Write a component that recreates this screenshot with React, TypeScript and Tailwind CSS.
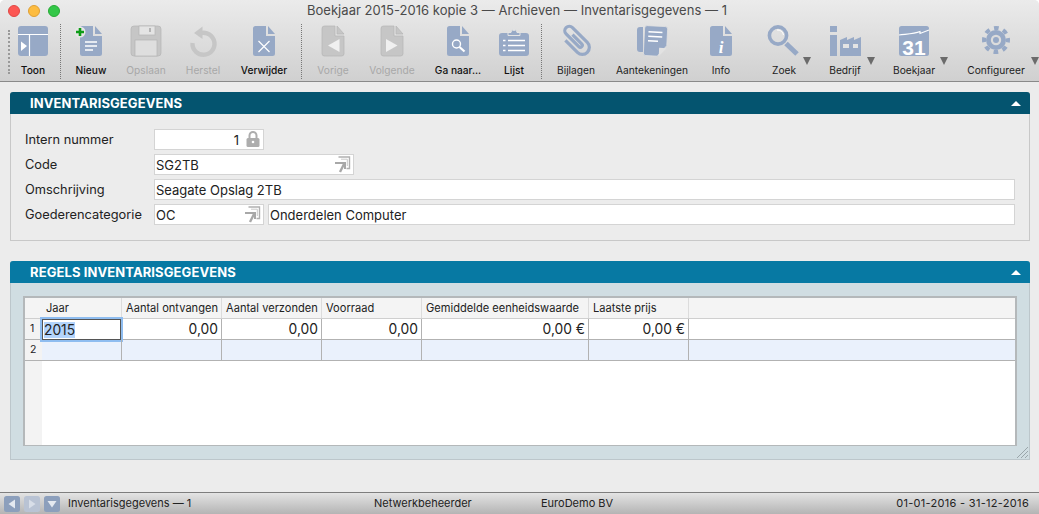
import React from "react";

const B = "#97a9c6";
const D = "#c6c6c6";
const E = "#b4b4b4";

function Doc({ c = B, s }: { c?: string; s?: string }) {
  return (
    <g>
      <path d="M9.5 1H20V11H29V28.5a2.5 2.5 0 0 1-2.5 2.5h-17A2.5 2.5 0 0 1 7 28.5V3.5A2.5 2.5 0 0 1 9.5 1Z" fill={c} stroke={s} strokeWidth={s ? 0.7 : 0} />
      <path d="M22 1L29 9H22Z" fill={c} stroke={s} strokeWidth={s ? 0.7 : 0} />
    </g>
  );
}

const icons: Record<string, React.ReactNode> = {
  toon: (
    <g>
      <rect x="3" y="1" width="30" height="30" rx="3" fill={B} />
      <path d="M3 9.5H33M14.5 9.5V31" stroke="#fff" strokeWidth="1.2" />
      <path d="M6 16.5L12 21L6 26Z" fill="#fff" />
    </g>
  ),
  nieuw: (
    <g>
      <Doc />
      <path d="M12 17H24M12 21H24M12 25H20" stroke="#fff" strokeWidth="1.3" />
      <circle cx="7" cy="7" r="5.5" fill="#e6e6e6" />
      <path d="M7 3V11M3 7H11" stroke="#0e9c17" strokeWidth="2.6" />
    </g>
  ),
  opslaan: (
    <g>
      <rect x="3" y="1" width="30" height="30" rx="3" fill={D} stroke={E} strokeWidth="0.7" />
      <rect x="11" y="1" width="16" height="9" fill="#e4e4e4" stroke={E} strokeWidth="0.7" />
      <rect x="21" y="3" width="2" height="4" fill={E} />
      <rect x="7" y="15" width="22" height="16" fill="#dedede" stroke={E} strokeWidth="0.7" />
    </g>
  ),
  herstel: (
    <g>
      <path d="M12.5 9.5A11 11 0 1 1 7.5 18" fill="none" stroke={D} strokeWidth="4.4" />
      <path d="M17.5 1.5V14L9 8Z" fill={D} />
    </g>
  ),
  verwijder: (
    <g>
      <Doc />
      <path d="M12.5 16L23.5 27M23.5 16L12.5 27" stroke="#fff" strokeWidth="1.2" />
    </g>
  ),
  vorige: (
    <g>
      <Doc c={D} s={E} />
      <path d="M24.5 14V27L13 20.5Z" fill="#f0f0f0" />
    </g>
  ),
  volgende: (
    <g>
      <Doc c={D} s={E} />
      <path d="M12 14V27L23.5 20.5Z" fill="#f0f0f0" />
    </g>
  ),
  ganaar: (
    <g>
      <Doc />
      <circle cx="16.5" cy="19" r="4" fill="none" stroke="#fff" strokeWidth="1.4" />
      <path d="M19.5 22L24.5 26.5" stroke="#fff" strokeWidth="2.2" />
    </g>
  ),
  lijst: (
    <g>
      <rect x="3" y="8" width="30" height="23" rx="3" fill={B} />
      <path d="M12 10V7.5h3a3 3 0 0 1 6 0h3V10.5H12Z" fill={B} stroke="#e4e4e4" strokeWidth="1" />
      <circle cx="18" cy="5" r="1.1" fill="#e4e4e4" />
      <path d="M7 15.5h2.5M7 20.5h2.5M7 25.5h2.5M12 15.5H29M12 20.5H29M12 25.5H29" stroke="#fff" strokeWidth="1.6" />
    </g>
  ),
  bijlagen: (
    <g transform="rotate(-45 18 16) translate(0 -2)">
      <path d="M11 10V27a7 7 0 0 0 14 0V6a4.5 4.5 0 0 0-9 0V24a2 2 0 0 0 4 0V11" fill="none" stroke={B} strokeWidth="3.2" />
    </g>
  ),
  aantekeningen: (
    <g>
      <path d="M3 5a3 3 0 0 1 3-3h3V27H6a3 3 0 0 1-3-3Z" fill={B} />
      <g transform="rotate(3 20 16)">
        <path d="M10 3.5A2.5 2.5 0 0 1 12.5 1H30.5A2.5 2.5 0 0 1 33 3.5V20L24 31H12.5A2.5 2.5 0 0 1 10 28.5Z" fill={B} stroke="#e2e2e2" strokeWidth="0.8" />
        <path d="M25.5 31V22.5H33Z" fill="#e2e2e2" />
        <path d="M14 7H28M14 11.5H28M14 16H24" stroke="#fff" strokeWidth="1.5" />
      </g>
    </g>
  ),
  info: (
    <g>
      <Doc />
      <text x="18" y="28" textAnchor="middle" fill="#fff" fontSize="17" fontWeight="700" fontStyle="italic" fontFamily="'Liberation Serif', serif">i</text>
    </g>
  ),
  zoek: (
    <g>
      <circle cx="12" cy="10.5" r="8.6" fill="none" stroke={B} strokeWidth="3.6" />
      <path d="M11 5a6 6 0 0 1 6.5 5" fill="none" stroke="#fff" strokeWidth="1" />
      <path d="M20 18.5L31 29" stroke={B} strokeWidth="5" />
    </g>
  ),
  bedrijf: (
    <g>
      <rect x="3" y="1" width="7" height="6" fill={B} />
      <rect x="3" y="10" width="7" height="21" fill={B} />
      <path d="M13 31V15L20 12V15L27 12V15L34 12V31Z" fill={B} />
      <rect x="16" y="19" width="6" height="4" fill="#e4e4e4" />
      <rect x="26" y="19" width="5" height="4" fill="#e4e4e4" />
    </g>
  ),
  boekjaar: (
    <g>
      <rect x="3" y="1" width="30" height="30" rx="2.5" fill={B} />
      <path d="M3 10C11 9 18 9 24 6.5L24 8.5L33 5" fill="none" stroke="#fff" strokeWidth="1.1" />
      <text x="18" y="30" textAnchor="middle" fill="#fff" fontSize="21" fontWeight="700" fontFamily="'Liberation Sans', sans-serif">31</text>
    </g>
  ),
  configureer: (
    <g>
      <circle cx="18" cy="15" r="10" fill={B} />
      <circle cx="18" cy="15" r="12" fill="none" stroke={B} strokeWidth="4" strokeDasharray="4.71 4.71" strokeDashoffset="2.35" />
      <circle cx="18" cy="15" r="5.2" fill="#dcdcdc" />
      <circle cx="18" cy="15" r="3" fill={B} />
    </g>
  ),
};

type Item = { id: string; label: string; w: string; off?: boolean; strong?: boolean; menu?: string };

function Tool({ id, label, w, off, strong, menu }: Item) {
  return (
    <div className={`relative flex flex-col items-center shrink-0 ${w}`}>
      <svg width="36" height="33" viewBox="0 0 36 33" className="mt-[3px] overflow-visible">{icons[id]}</svg>
      <span className={`mt-[5px] text-[10.2px] leading-[14px] whitespace-nowrap ${off ? "text-[#a8a8a8]" : strong ? "text-[#111] font-medium" : "text-[#1c1c1c]"}`}>{label}</span>
      {menu && <span className={`absolute top-[35px] w-0 h-0 border-x-[4.5px] border-x-transparent border-t-[8px] border-t-[#6b6b6b] ${menu}`} />}
    </div>
  );
}

const Sep = () => <div className="w-0 h-[55px] mt-[2px] border-l border-dotted border-[#777] shrink-0" />;

function Arrow({ cls }: { cls: string }) {
  return (
    <svg width="17" height="17" viewBox="0 0 17 17" className={`absolute ${cls}`}>
      <path d="M4.5 1H15.5V12.5H12.5" fill="none" stroke="#b0b0b0" strokeWidth="1.4" />
      <path d="M7 3.2H13.3V10" fill="none" stroke="#c8c8c8" strokeWidth="1" />
      <path d="M1 7H11V13" fill="none" stroke="#a8a8a8" strokeWidth="2" />
      <path d="M10 8L6 16" stroke="#a8a8a8" strokeWidth="2.4" />
    </svg>
  );
}

function Field({ value, w, right, children }: { value: string; w: string; right?: boolean; children?: React.ReactNode }) {
  return (
    <div className={`relative h-[21px] bg-white border border-[#d4d4d4] flex items-center pl-[1px] pt-[2px] text-[13px] text-[#222] ${w} ${right ? "justify-end pr-[24px]" : ""}`}>
      {value}
      {children}
    </div>
  );
}

function Label({ children }: { children: string }) {
  return <div className="w-[129px] text-[12.8px] text-[#222] leading-[21px] shrink-0 mt-[-1px]">{children}</div>;
}

function Header({ title, color }: { title: string; color: string }) {
  return (
    <div className={`h-[22px] rounded-t-[3px] flex items-center justify-between pl-[20px] pr-[9px] ${color}`}>
      <span className="text-white font-bold text-[13px] tracking-[0.1px] pt-[1px]">{title}</span>
      <span className="w-0 h-0 border-x-[5px] border-x-transparent border-b-[5px] border-b-white" />
    </div>
  );
}

const cols = [
  { w: "w-[80px]", h: "Jaar", v: "2015" },
  { w: "w-[100px]", h: "Aantal ontvangen", v: "0,00" },
  { w: "w-[100px]", h: "Aantal verzonden", v: "0,00" },
  { w: "w-[100px]", h: "Voorraad", v: "0,00" },
  { w: "w-[167px]", h: "Gemiddelde eenheidswaarde", v: "0,00 €" },
  { w: "w-[100px]", h: "Laatste prijs", v: "0,00 €" },
];

function Nav({ dir, off }: { dir: "l" | "r" | "d"; off?: boolean }) {
  const d = dir === "l" ? "M11 3.5V12.5L4.5 8Z" : dir === "r" ? "M5 3.5V12.5L11.5 8Z" : "M3.5 5H12.5L8 11.5Z";
  return (
    <svg width="16" height="16" viewBox="0 0 16 16">
      <rect x="0" y="0" width="16" height="16" rx="2.5" fill={off ? "#b9c3d4" : "#8c9fbc"} />
      <path d={d} fill={off ? "#d8dee8" : "#e4e9f0"} />
    </svg>
  );
}

export default function App() {
  return (
    <div className="w-[1039px] h-[514px] overflow-hidden flex flex-col bg-[#ececec] rounded-t-[5px]" style={{ fontFamily: "Inter, 'Liberation Sans', sans-serif" }}>
      <div className="h-[82px] shrink-0 border-b border-[#8a8a8a] bg-gradient-to-b from-[#ebebeb] to-[#d0d0d0] flex flex-col">
        <div className="h-[22px] shrink-0 relative flex items-center justify-center pr-[5px]">
          <div className="absolute left-[8px] top-[5px] flex gap-[8px]">
            <span className="w-[12px] h-[12px] rounded-full bg-[#fc5753] border border-[#df4744]" />
            <span className="w-[12px] h-[12px] rounded-full bg-[#fdbc40] border border-[#de9f34]" />
            <span className="w-[12px] h-[12px] rounded-full bg-[#33c748] border border-[#27aa35]" />
          </div>
          <span className="text-[13px] text-[#4a4a4a] tracking-[0.03px]">Boekjaar 2015-2016 kopie 3 — Archieven — Inventarisgegevens — 1</span>
        </div>
        <div className="flex flex-1">
          <div className="w-[8px] shrink-0" />
          <div className="w-0 h-[44px] mt-[8px] border-l-2 border-dotted border-[#999] shrink-0" />
          <Tool id="toon" label="Toon" w="w-[46px]" strong />
          <div className="w-[4px] shrink-0" />
          <Sep />
          <Tool id="nieuw" label="Nieuw" w="w-[60px]" strong />
          <Tool id="opslaan" label="Opslaan" w="w-[50px]" off />
          <Tool id="herstel" label="Herstel" w="w-[64px]" off />
          <Tool id="verwijder" label="Verwijder" w="w-[58px]" strong />
          <div className="w-[8px] shrink-0" />
          <Sep />
          <Tool id="vorige" label="Vorige" w="w-[62px]" off />
          <Tool id="volgende" label="Volgende" w="w-[56px]" off />
          <Tool id="ganaar" label="Ga naar..." w="w-[76px]" strong />
          <Tool id="lijst" label="Lijst" w="w-[36px]" strong />
          <div className="w-[9px] shrink-0" />
          <Sep />
          <Tool id="bijlagen" label="Bijlagen" w="w-[68px]" />
          <Tool id="aantekeningen" label="Aantekeningen" w="w-[84px]" />
          <Tool id="info" label="Info" w="w-[54px]" />
          <Tool id="zoek" label="Zoek" w="w-[72px]" menu="right-[9.5px]" />
          <Tool id="bedrijf" label="Bedrijf" w="w-[50px]" menu="right-[-4.5px]" />
          <Tool id="boekjaar" label="Boekjaar" w="w-[88px]" menu="right-[10.5px]" />
          <Tool id="configureer" label="Configureer" w="w-[76px]" menu="right-[-4.5px]" />
        </div>
      </div>

      <div className="flex-1 px-[10px] pt-[10px] pr-[9px] flex flex-col gap-[20px]">
        <section className="h-[149px] rounded-t-[3px] border-b border-x border-[#c8c8c8] bg-[#ececec]">
          <div className="mx-[-1px]"><Header title="INVENTARISGEGEVENS" color="bg-[#04546f]" /></div>
          <div className="pl-[14px] pt-[15px] flex flex-col">
            <div className="flex items-center h-[21px] mb-[4px]">
              <Label>Intern nummer</Label>
              <Field value="1" w="w-[110px]" right>
                <svg width="14" height="16" viewBox="0 0 14 16" className="absolute right-[3px] top-[1px]">
                  <path d="M3.5 7V4.5a3.5 3.5 0 0 1 7 0V7" fill="none" stroke="#adadad" strokeWidth="2" />
                  <rect x="0.5" y="7" width="13" height="9" rx="1.5" fill="#adadad" />
                  <circle cx="7" cy="11" r="1.3" fill="#fff" />
                </svg>
              </Field>
            </div>
            <div className="flex items-center h-[21px] mb-[4px]">
              <Label>Code</Label>
              <Field value="SG2TB" w="w-[200px]"><Arrow cls="right-[2px] top-[1px]" /></Field>
            </div>
            <div className="flex items-center h-[21px] mb-[4px]">
              <Label>Omschrijving</Label>
              <Field value="Seagate Opslag 2TB" w="w-[861px]" />
            </div>
            <div className="flex items-center h-[21px]">
              <Label>Goederencategorie</Label>
              <Field value="OC" w="w-[110px]"><Arrow cls="right-[2px] top-[1px]" /></Field>
              <Field value="Onderdelen Computer" w="w-[747px] ml-[4px]" />
            </div>
          </div>
        </section>

        <section className="relative h-[199px] rounded-t-[3px] border-b border-x border-[#bcc6cb] bg-[#d0dde2]">
          <div className="mx-[-1px]"><Header title="REGELS INVENTARISGEGEVENS" color="bg-[#0779a3]" /></div>
          <div className="mx-[12px] mt-[13px] h-[150px] border-2 border-[#b4b8ba] border-b-[1.5px] bg-white flex flex-col text-[#222]">
            <div className="flex h-[21px] bg-[#f4f4f4] border-b border-[#cfcfcf] shrink-0 text-[11.1px]">
              <div className="w-[17px] shrink-0" />
              {cols.map((c) => (
                <div key={c.h} className={`${c.w} shrink-0 leading-[20px] whitespace-nowrap border-r border-[#dcdcdc] pl-[4px]`}>{c.h}</div>
              ))}
            </div>
            {[0, 1].map((r) => (
              <div key={r} className={`flex h-[21px] shrink-0 border-b border-[#b2b2b2] ${r ? "bg-[#eaf1fc]" : "bg-white"}`}>
                <div className="w-[17px] shrink-0 bg-[#f3f3f3] text-[10.5px] pl-[5px] leading-[20px]">{r + 1}</div>
                {cols.map((c, i) => (
                  <div key={c.h} className={`relative ${c.w} shrink-0 border-r border-[#b2b2b2] text-[13.8px] leading-[21px] pr-[3px] ${i === 0 ? "" : "text-right"}`}>
                    {!r && i === 0 ? (
                      <div className="absolute left-0 top-0 right-0 bottom-[-1px] bg-white border border-[#555] outline-2 outline-[#8fbdf0] pl-[1px] leading-[20px]">
                        <span className="bg-[#b3d4fc]">{c.v}</span>
                      </div>
                    ) : !r ? c.v : ""}
                  </div>
                ))}
                <div className="flex-1" />
              </div>
            ))}
            <div className="flex-1 flex">
              <div className="w-[17px] bg-[#f3f3f3]" />
            </div>
          </div>
          <svg width="14" height="14" viewBox="0 0 14 14" className="absolute right-0 bottom-0">
            <path d="M2 13L13 2M6 13L13 6M10 13L13 10" stroke="#9aa5aa" strokeWidth="1" />
          </svg>
        </section>
      </div>

      <div className="h-[22px] shrink-0 border-t border-[#7e7e7e] bg-gradient-to-b from-[#e4e4e4] to-[#b4b4b4] flex items-center text-[11px] text-[#222]">
        <div className="flex gap-[4px] ml-[4px] w-[64px] shrink-0">
          <Nav dir="l" />
          <Nav dir="r" off />
          <Nav dir="d" />
        </div>
        <span className="w-[306px] shrink-0">Inventarisgegevens — 1</span>
        <span className="w-[166px] shrink-0">Netwerkbeheerder</span>
        <span className="ml-[1px]">EuroDemo BV</span>
        <span className="ml-auto mr-[10px] tracking-[0.3px]">01-01-2016 - 31-12-2016</span>
      </div>
    </div>
  );
}
